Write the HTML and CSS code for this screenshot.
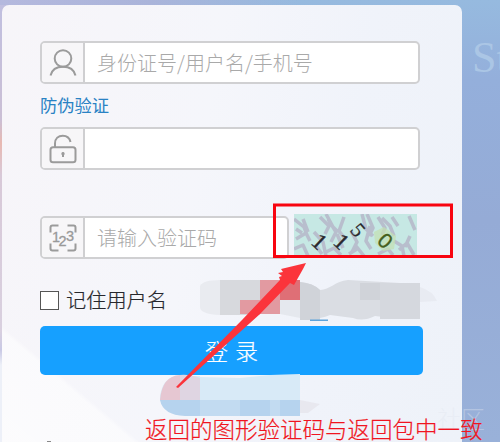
FILE: index.html
```
<!DOCTYPE html>
<html lang="zh-CN">
<head>
<meta charset="utf-8">
<title>登录</title>
<link rel="stylesheet" href="styles.css">
</head>
<body>
<div class="backdrop-word">St</div>
<main class="panel">
  <form class="form">
    <div class="field">
      <span class="icon"><svg width="28" height="28" viewBox="0 0 28 28"><circle cx="14" cy="9.5" r="8.3"/><path d="M1.5 26.5C3 20.5 8 17.8 14 17.8s11 2.7 12.5 8.7"/></svg></span>
      <span class="value">身份证号/用户名/手机号</span>
    </div>
    <div class="hint">防伪验证</div>
    <div class="field">
      <span class="icon"><svg width="28" height="30" viewBox="0 0 28 30"><rect x="1.5" y="13.3" width="25" height="15" rx="2.5"/><path d="M6 13V9.5C6 4.5 9.4 1.7 13.8 1.7c4 0 6.8 2.1 7.7 6.3M14 18.5v4.5"/><circle cx="14" cy="19.8" r=".7"/></svg></span>
      <span class="value"></span>
    </div>
    <div class="captcha-row">
      <div class="field short">
        <span class="icon"><svg width="28" height="28" viewBox="0 0 28 28"><path d="M1.500 8.500v-5q0-2 2-2h6M18.500 1.500h6q2 0 2 2v5M1.500 19.500v5q0 2 2 2h6M18.500 26.500h6q2 0 2-2v-5"/><text x="3" y="18">1</text><text x="9.500" y="22">2</text><text x="17" y="17">3</text></svg></span>
        <span class="value">请输入验证码</span>
      </div>
      <svg class="captcha" width="123" height="42" viewBox="0 0 123 42">
        <rect width="123" height="42" fill="#c6e8e4"/>
        <g class="noise">
          <path d="M0 5l10 8 3 8M2 25l10-6 4 8M9 5l5 13M0 35l9-4 5 11M20 18l9 10 3 14M2 15l6 4"/>
          <path d="M26 3l9 9-4 8M32 0l7 13 4 4M34 5l8 13-5 10M50 3l-5 14 7 9M43 20l6 14M30 39l10-5 7 7M22 32l6 8"/>
          <path d="M57 17l6 11-5 10M68 0l4 15 7 7M73 0l6 14-4 8M76 12l-4 15 5 8M62 32l8 10M84 3l7 11-3 7"/>
          <path d="M88 4l8 8 4 10M98 3l6 9M84 40l10-5 5 6M100 27l8 5 2 10M115 2l6 14M105 36l8-7 7 12M116 22l-5 11M55 40l8-5"/>
        </g>
        <path class="digit-halo" d="M80 18l10-5 12 9-2 13-11 2-8-8z"/>
        <text class="digit" transform="translate(25 28) rotate(43)" y="7">1</text>
        <text class="digit" transform="translate(47 28) rotate(43)" y="7">1</text>
        <text class="digit five" transform="translate(64 16) rotate(50)" y="7">5</text>
        <text class="digit zero" transform="translate(91 27) rotate(42)" y="7">0</text>
      </svg>
    </div>
    <div class="remember"><span class="box"></span><span>记住用户名</span></div>
    <div class="submit"><span>登</span><span>录</span></div>
  </form>
</main>
<svg class="overlay" width="500" height="442" viewBox="0 0 500 442">
  <path fill="#e9ebf0" d="M200 286q3-6 20-6h40v35h-40q-20-1-20-8z"/>
  <path fill="#d7d9dd" d="M220 280h40v35h-40z"/>
  <path fill="#e29aa1" d="M260 280h20v34h-40v-14h20z"/>
  <path fill="#df6f76" d="M280 280h20v20h-20z"/>
  <path fill="#e5e8ee" d="M280 300h20v18l-20-4z"/>
  <path fill="#dadde3" d="M300 282q13 1 20 8c10 0 15-9 28-10l52 3v36l-25-3q-12 6-22 2l-23-3q-10 5-30 4z"/>
  <path fill="#d0d3d9" d="M300 282q13 1 20 8v30h-20zM360 283h20v17h-20z"/>
  <path fill="#d5d8de" d="M380 283h40v36h-40z"/>
  <path fill="#e8ebf2" d="M420 287q13 4 17 14l-17 1z"/>
  <path fill="#5ca3db" d="M310 319.500h18v1.500h-18z"/>
  <path fill="#d8eaf7" d="M160 400v-4q3-20 20-20h20v8l45 1 55-1v22h-115q-20-1-25-6z"/>
  <path fill="#d8eaf7" d="M200 386v-9l40 1 30-3 30-1v12z"/>
  <path fill="#e6c7d2" d="M160 400q2-24 20-25v25z"/>
  <path fill="#dfd5e2" d="M180 375q9-1 20 3v22h-20z"/>
  <path fill="#b6d3ee" d="M160 400h40v16h-15q-22-1-25-16zM240 400h30v16h-30zM280 400h20v16h-20z"/>
  <path fill="#c2dbf1" d="M200 400h40v16h-40zM270 400h10v16h-10z"/>
  <path fill="#e8e8ef" d="M300 400l20 4-12 9h-8z"/>
  <path fill="#fb343b" d="M306 263l-3 6-9 16-4-2-30 31-30 27-52 47-2-1 66-67 38-40-1-3 3-1-4-3 5-1-2-3z"/>
  <rect x="274.500" y="205" width="177" height="51.500" fill="none" stroke="#f80510" stroke-width="3"/>
</svg>
<div class="watermark">社区</div>
<div class="caption">返回的图形验证码与返回包中一致</div>
<div class="cut-mark"></div>
</body>
</html>
```
FILE: styles.css
```
* { box-sizing: border-box; }
body {
  margin: 0;
  width: 500px;
  height: 442px;
  padding: 5px 0 0 2px;
  position: relative;
  overflow: hidden;
  font-family: "Noto Sans CJK SC", sans-serif;
  font-weight: 300;
  background:
    linear-gradient(90deg, #b5b9de 0, #aab4da 150px, rgba(148, 178, 219, 0) 300px) 0 0 / 100% 5px no-repeat,
    linear-gradient(180deg, #c0bfe0 0, #cbbfd5 120px, #e8b9b2 143px, #d8c9d8 175px, #d9d0df 330px, #c9c9e5 350px, #edf0f8 365px) 0 0 / 8px 100% no-repeat,
    linear-gradient(180deg, #96badf 0, #94afdb 80px, #95abd6 220px, #99b1d9 442px);
}
.panel {
  width: 460px;
  height: 437px;
  padding: 36px 0 0 38px;
  border-radius: 7px 7px 0 0;
  background:
    linear-gradient(40deg, rgba(255,255,255,.65) 0, rgba(255,255,255,.5) 85px, rgba(255,255,255,0) 89px),
    linear-gradient(100deg, #f7f5f9 0, #f5f6fb 42%, #f0f3fa 70%, #eef2f9 100%);
}
.form { display: flex; flex-direction: column; align-items: flex-start; }
.field {
  display: flex;
  width: 380px;
  height: 43px;
  border: 2px solid #d0d0d2;
  border-radius: 5px;
  overflow: hidden;
  background: #fff;
}
.field.short { width: 249px; }
.icon {
  width: 43px;
  flex: none;
  display: flex;
  align-items: center;
  justify-content: center;
  border-right: 2px solid #cfcfd1;
  background: #f7f6f8;
}
.icon svg { fill: none; stroke: #9b9b9b; stroke-width: 2; }
.icon text { fill: #999; stroke: #999; stroke-width: .3; font: 400 14.500px "Liberation Sans", sans-serif; }
.value { padding-left: 12px; font-size: 20px; line-height: 40px; color: #a9a9a9; white-space: nowrap; }
.hint { height: 43px; font-size: 17.300px; line-height: 41px; font-weight: 400; color: #2a82c4; }
.captcha-row { display: flex; gap: 5px; margin-top: 46px; align-items: flex-start; }
.captcha { margin-top: -2px; }
.noise { fill: none; stroke: #b3adc4; stroke-width: 3.500; stroke-linejoin: round; opacity: .7; }
.digit { font: 23px "Liberation Serif", serif; text-anchor: middle; fill: #2a2a2e; stroke: #2a2a2e; stroke-width: .4; }
.digit.five { font-size: 21px; stroke-width: .2; }
.digit.zero { font: 21px "Liberation Sans", sans-serif; fill: #45601d; stroke: #45601d; }
.digit-halo { fill: #c3e0b0; opacity: .7; }
.remember { display: flex; align-items: center; gap: 7px; height: 30px; margin-top: 26px; font-size: 20.200px; line-height: 30px; color: #26272c; -webkit-text-stroke: .2px #26272c; }
.box { width: 19px; height: 19px; border: 1.500px solid #555; background: #fff; }
.submit {
  display: flex;
  justify-content: center;
  gap: 7px;
  width: 383px;
  height: 49px;
  margin-top: 11px;
  border-radius: 5px;
  background: #16a0ff;
  color: #fff;
  font-size: 23px;
  line-height: 48px;
  -webkit-text-stroke: .2px #fff;
}
.overlay { position: absolute; left: 0; top: 0; }
.backdrop-word { position: absolute; left: 472px; top: 32px; font: 44px "Liberation Serif", serif; color: #abc6e5; }
.watermark { position: absolute; left: 437px; top: 402px; font-size: 24px; line-height: 32px; color: rgba(225,230,240,.4); }
.caption { position: absolute; left: 145px; top: 410px; font-size: 22.500px; line-height: 36px; color: #f01420; -webkit-text-stroke: .2px #f01420; white-space: nowrap; }
.cut-mark { position: absolute; left: 47px; top: 441px; width: 4px; height: 1px; background: #888; }
```
